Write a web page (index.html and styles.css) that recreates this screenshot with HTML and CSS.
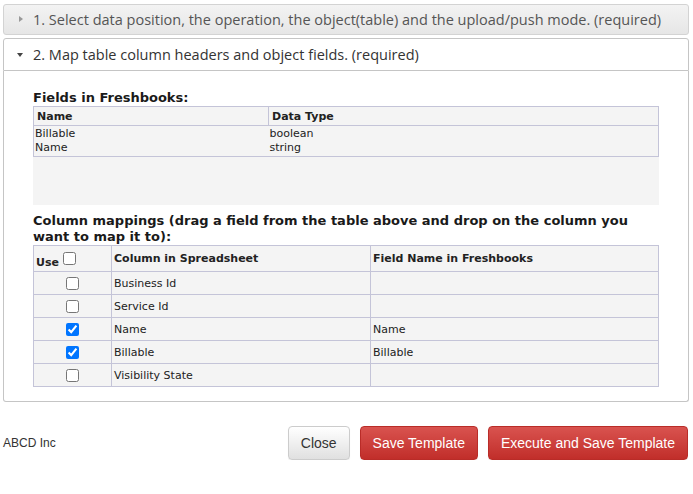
FILE: index.html
```html
<!DOCTYPE html>
<html>
<head>
<meta charset="utf-8">
<link rel="stylesheet" href="styles.css">
</head>
<body>
<div class="wrap">
  <div class="acc-head closed"><span class="tri tri-right"></span>1. Select data position, the operation, the object(table) and the upload/push mode. (required)</div>
  <div class="acc-head open"><span class="tri tri-down"></span>2. Map table column headers and object fields. (required)</div>
  <div class="acc-body">
    <div class="title">Fields in Freshbooks:</div>
    <div class="fields-box">
      <table class="fields">
        <thead><tr><th class="c1">Name</th><th>Data Type</th></tr></thead>
        <tbody>
          <tr class="first"><td>Billable</td><td>boolean</td></tr>
          <tr class="last"><td>Name</td><td>string</td></tr>
        </tbody>
      </table>
    </div>
    <div class="title map-title">Column mappings (drag a field from the table above and drop on the column you want to map it to):</div>
    <table class="map">
      <thead><tr><th class="use">Use <input type="checkbox"></th><th class="col">Column in Spreadsheet</th><th>Field Name in Freshbooks</th></tr></thead>
      <tbody>
        <tr><td class="chk"><input type="checkbox"></td><td>Business Id</td><td></td></tr>
        <tr><td class="chk"><input type="checkbox"></td><td>Service Id</td><td></td></tr>
        <tr><td class="chk"><input type="checkbox" checked></td><td>Name</td><td>Name</td></tr>
        <tr><td class="chk"><input type="checkbox" checked></td><td>Billable</td><td>Billable</td></tr>
        <tr><td class="chk"><input type="checkbox"></td><td>Visibility State</td><td></td></tr>
      </tbody>
    </table>
  </div>
  <div class="footer">
    <div class="company">ABCD Inc</div>
    <div class="buttons">
      <button class="btn btn-default">Close</button>
      <button class="btn btn-danger">Save Template</button>
      <button class="btn btn-danger">Execute and Save Template</button>
    </div>
  </div>
</div>
</body>
</html>
```
FILE: styles.css
```css
html, body { margin: 0; padding: 0; background: #fff; }
.wrap { padding: 4px 4px 0 3px; }
.acc-head {
  font-family: "Open Sans", "DejaVu Sans", sans-serif;
  font-size: 14.5px;
  box-sizing: border-box;
  padding-left: 29px;
  position: relative;
  border-radius: 3px;
  white-space: nowrap;
}
.acc-head.closed {
  border: 1px solid #d3d3d3;
  background: linear-gradient(#f3f3f3, #e6e6e6);
  color: #555;
  height: 31px;
  line-height: 29px;
}
.acc-head.open {
  margin-top: 3px;
  border: 1px solid #c5c5c5;
  background: #fff;
  color: #333;
  height: 33px;
  line-height: 31px;
  border-radius: 3px 3px 0 0;
}
.tri { position: absolute; width: 0; height: 0; }
.tri-right { left: 15px; top: 11px; border-top: 3.5px solid transparent; border-bottom: 3.5px solid transparent; border-left: 4px solid #999; }
.tri-down { left: 13px; top: 14px; border-left: 3.5px solid transparent; border-right: 3.5px solid transparent; border-top: 4px solid #444; }
.acc-body {
  border: 1px solid #c5c5c5;
  border-top: 0;
  border-radius: 0 0 3px 3px;
  padding: 19px 29px 14px 29px;
  font-family: "DejaVu Sans", Verdana, sans-serif;
  color: #222;
}
.title { font-weight: bold; font-size: 13px; line-height: 16px; color: #1a1a1a; }
.fields-box { background: #f4f4f4; height: 99px; }
table { border-collapse: collapse; width: 100%; font-family: "DejaVu Sans", Verdana, sans-serif; font-size: 11px; color: #222; }
.fields { border: 1px solid #c4c4d8; }
.fields th { text-align: left; font-weight: bold; border: 1px solid #c4c4d8; height: 18px; padding: 0 3px; }
.fields th.c1 { width: 228px; }
.fields td { padding: 0 0 0 1px; height: 14px; line-height: 14px; }
.fields tr.first td { padding-top: 1px; }
.fields tr.last td { padding-bottom: 1px; }
.map-title { margin-top: 8px; margin-bottom: 0; }
.map { background: #f4f4f4; }
.map th, .map td { border: 1px solid #c4c4d8; text-align: left; padding: 0 2px; }
.map th { height: 23px; font-weight: bold; }
.map td { height: 22px; }
.map th.use { width: 73px; vertical-align: bottom; padding-bottom: 2px; }
.map th.col { width: 254px; }
.map td.chk { text-align: center; }
.map input { margin: 0; width: 13px; height: 13px; vertical-align: middle; }
.map th.use input { vertical-align: 1px; }
.footer { display: flex; justify-content: space-between; align-items: center; margin-top: 24px; }
.company { font-family: "Liberation Sans", Arial, sans-serif; font-size: 12px; color: #333; }
.buttons { display: flex; gap: 10px; margin-right: 1px; }
.btn {
  font-family: "Liberation Sans", Arial, sans-serif;
  font-size: 14px;
  height: 34px;
  padding: 0 12px;
  border-radius: 4px;
  border: 1px solid;
}
.btn-default { background: linear-gradient(#fff, #e0e0e0); border-color: #ccc; color: #333; box-shadow: inset 0 1px 0 rgba(255,255,255,.15), 0 1px 1px rgba(0,0,0,.075); }
.btn-danger { background: linear-gradient(#d9534f, #c12e2a); border-color: #b92c28; color: #fff; box-shadow: 0 1px 1px rgba(0,0,0,.075); }
```
